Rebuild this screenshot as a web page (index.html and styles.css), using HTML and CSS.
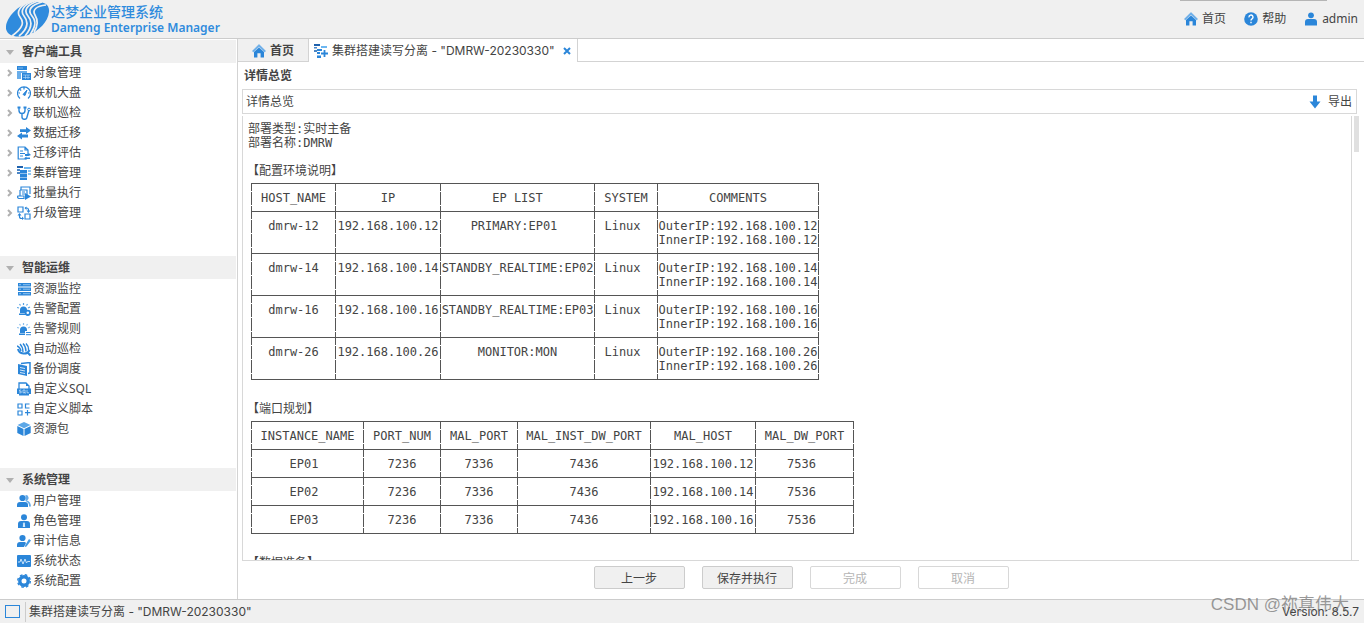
FILE: index.html
```html
<!DOCTYPE html>
<html lang="zh-CN">
<head>
<meta charset="utf-8">
<title>达梦企业管理系统</title>
<link rel="stylesheet" href="styles.css">
</head>
<body>
<svg class="defs" aria-hidden="true">
  <symbol id="home" viewBox="0 0 14 14"><path d="M7 .4 13.600 7l-1 1L7 2.600 1.400 8l-1-1z" fill="#64aae8" stroke="#64aae8" stroke-width=".5"/><path d="M7 3.400 12 8v5.600H8.600V9.200H5.400v4.400H2V8z" fill="#2b86d9"/></symbol>
  <symbol id="tree" viewBox="0 0 14 14"><path d="M0 0h10v4H0z" fill="#2b86d9"/><path d="M0 5h10v2H4v6H0z" fill="#6aaeea"/><path d="M5 7h9v7H5z" fill="#2b86d9"/><path d="M6 9h7M6 11.500h7M8.500 9v4M11 9v4M1 2h5" stroke="#b9dcfa" stroke-width=".6"/></symbol>
  <symbol id="gauge" viewBox="0 0 14 14"><path d="M3 12.500a6.500 6.500 0 1 1 8 0M7 1.500v2M1.500 7h1.500M11 7h1.500M3 3.500l1.200 1" fill="none" stroke="#2b86d9" stroke-width="1.200"/><path d="M10 4 8 9.500 6 8.500z" fill="#2b86d9" stroke="#2b86d9"/></symbol>
  <symbol id="steth" viewBox="0 0 14 14"><path d="M2 2v2.500a3 3 0 0 0 6 0V2M5 7.500v3a2.500 2.500 0 0 0 5 .5l2-7" fill="none" stroke="#2b86d9" stroke-width="1.400"/><path d="M.5.500h3v2h-3zM6.500.500h3v2h-3z" fill="#2b86d9"/><circle cx="12" cy="3.500" r="1.300" fill="#fff" stroke="#2b86d9"/></symbol>
  <symbol id="swap" viewBox="0 0 14 14"><path d="M3 3.200h6V1l5 3.500L9 8V6H3z" fill="#2b86d9"/><path d="M11 8.500H5V6.500L0 10l5 3.500V11.500h6z" fill="#2b86d9"/></symbol>
  <symbol id="assess" viewBox="0 0 14 14"><path d="M9 13H1.200V1H8l3 3v4M8 1v3h3M3 5h3M3 7.500h5M3 10h3" fill="none" stroke="#2b86d9" stroke-width="1.200"/><path d="M8 8h3.500V6.800L14 9l-2.500 1H8zM13 11.500H9.500v-1L7 12.200 9.500 14v-1H13z" fill="#2b86d9"/></symbol>
  <symbol id="cluster" viewBox="0 0 14 14"><path d="M0 0h6v2H0z" fill="#1f62ae"/><path d="M0 3h3v2H0zM0 6h3v2H0z" fill="#4b86c6"/><path d="M7 1h7v2H7z" fill="#6db7f1"/><path d="M11 4h3v2h-3zM11 7h3v2h-3z" fill="#8bc5f3"/><path d="M3 4h7v3.500H3zM3 8h7v3H3zM3 11.500h7V14H3z" fill="#2b86d9"/></symbol>
  <symbol id="clusteradd" viewBox="0 0 14 14"><path d="M0 0h6v2H0z" fill="#1f62ae"/><path d="M0 3h3v1.500H0zM0 6h3v2H0z" fill="#4b86c6"/><path d="M7 2h6v2H7z" fill="#6db7f1"/><path d="M3 5h5v2H3zM3 8h3v2H3zM3 11.500h4V14H3z" fill="#2b86d9"/><path d="M10.500 6v7M7 9.500h7" stroke="#2b86d9" stroke-width="1.800"/></symbol>
  <symbol id="batch" viewBox="0 0 14 14"><path d="M4 4V1h9v7M3 4h7v6M1 10h6v2.500H2A1.500 1.500 0 0 1 1 10zM3 10V4M5 6h3M5 8h3" fill="none" stroke="#2b86d9" stroke-width="1.200"/><path d="m8 7 6 3.500L8 14z" fill="#2b86d9"/></symbol>
  <symbol id="upgrade" viewBox="0 0 14 14"><path d="M1 1h5v5H1zM8 8h5v5H8zM2.500 8v2.500a2 2 0 0 0 2 2H6M8 2h1.500a2 2 0 0 1 2 2v2" fill="none" stroke="#2b86d9" stroke-width="1.200"/><path d="M.5 9.500 2.500 7l2 2.500zM9.500 4.500h4l-2 2.500zM5 10.500l2 2-2 1.500zM9.500.500l-2 1.500 2 2z" fill="#2b86d9"/></symbol>
  <symbol id="server" viewBox="0 0 14 14"><path d="M1 1h13v3.500H1zM1 5.500h13V9H1zM1 10h13v3.500H1z" fill="#2b86d9"/><path d="M2 2.700h2M6 2.700h7M2 7.200h2M6 7.200h7M2 11.700h2M6 11.700h7" stroke="#b9dcfa" stroke-width=".7"/></symbol>
  <symbol id="alarmcfg" viewBox="0 0 14 14"><path d="M3 11V8a3.500 3.500 0 0 1 7 0v3zM2 11.500h7V13H2z" fill="#2b86d9"/><path d="M6.500 1v2M2.500 2l1 1.500M10.500 2l-1 1.500M0 5.500l2 .5M13 5l-2 1" stroke="#56a2e4" stroke-width="1.200"/><circle cx="10.800" cy="10.800" r="2.200" fill="#fff" stroke="#2b86d9" stroke-width="1.800"/></symbol>
  <symbol id="alarmrule" viewBox="0 0 14 14"><path d="M3 11V8a3.500 3.500 0 0 1 7 0v1H8v2zM2 11.500h6V13H2z" fill="#2b86d9"/><path d="M6.500 1v2M2.500 2l1 1.500M10.500 2l-1 1.500M0 5.500l2 .5M13 5l-2 1" stroke="#8abfee" stroke-width="1.200"/><path d="M9 10.500h5M9 12.700h5" stroke="#2b86d9"/></symbol>
  <symbol id="patrol" viewBox="0 0 14 14"><path d="M1 7a6 5.500 0 0 0 11.500 1M11 11l2.500 2.500" fill="none" stroke="#2b86d9" stroke-width="2"/><path d="M3 2q3 3 3 8M6 1.500q3 3 3 8M9 1.500q3 3 2.500 7M0 4q3 1 4 5" fill="none" stroke="#2b86d9" stroke-width="1.400"/></symbol>
  <symbol id="backup" viewBox="0 0 14 14"><path d="M4 1.500 13 .5V11l-2 .5" fill="none" stroke="#2b86d9" stroke-width="1.500"/><path d="m1 2 9 2v10l-9-2z" fill="#2b86d9"/><path d="m3 5.500 5 1M3 8l5 1M3 10.500l5 1" stroke="#fff" stroke-width=".8"/></symbol>
  <symbol id="sqlfile" viewBox="0 0 14 14"><path d="M2 7V1h7l3 3v3" fill="#fff" stroke="#2b86d9" stroke-width="1.300"/><path d="M9 1v3h3zM0 6.500h14V12h-2v1.500H2V12H0z" fill="#2b86d9"/><path d="M4.200 8H2.500v1.300h1.700v1.500H2.200M6 8h2v2.800H6zM7.500 10l1 1.500M10 7.800v3h2" fill="none" stroke="#d3e9fc" stroke-width=".7"/></symbol>
  <symbol id="script" viewBox="0 0 14 14"><path d="M1 2h4v4H1zM1 9h4v4H1zM12.500 2H8.500v4h4M10.500 8v5.500M8 10.700h5.500" fill="none" stroke="#2b86d9" stroke-width="1.200"/></symbol>
  <symbol id="cube" viewBox="0 0 14 14"><path d="m7 0 6.500 3L7 6.300.5 3z" fill="#5ca7e7"/><path d="m.3 4 6.200 3v7L.3 11zM13.700 4 7.500 7v7l6.200-3z" fill="#2b86d9"/></symbol>
  <symbol id="users" viewBox="0 0 14 14"><path d="M8.500 1a2.700 2.700 0 0 1 1 5.300Q13.500 7 14 12.500h-2Q12.500 8.500 8.500 7z" fill="#64aae8"/><circle cx="5.500" cy="4" r="3.100" fill="#2b86d9"/><path d="M0 13v-2q0-3 3-3h5q3 0 3 3v2z" fill="#2b86d9"/></symbol>
  <symbol id="role" viewBox="0 0 14 14"><circle cx="7" cy="3.200" r="3" fill="#2b86d9"/><path d="M1 14v-4q0-3 3-3h6q3 0 3 3v4z" fill="#2b86d9"/><path d="m7 8 .8 1.200L8.200 13H5.800l.4-3.800z" fill="#d3e9fc"/></symbol>
  <symbol id="audit" viewBox="0 0 14 14"><circle cx="5.500" cy="4" r="3.100" fill="#2b86d9"/><path d="M0 13v-2q0-3 3-3h5l1 1-2 4z" fill="#2b86d9"/><path d="m12 5 2 1.500-4.500 6L8 13l.3-2z" fill="#469ae2"/></symbol>
  <symbol id="pulse" viewBox="0 0 14 14"><rect y="1" width="14" height="12" rx="1" fill="#2b86d9"/><path d="M1 8h2l1-3 2 5 2-5 1.500 4 1-1.500H13" fill="none" stroke="#c7e2fa"/></symbol>
  <symbol id="gear" viewBox="0 0 14 14"><circle cx="7" cy="7" r="4.200" fill="none" stroke="#2b86d9" stroke-width="3.400"/><circle cx="7" cy="7" r="6.300" fill="none" stroke="#2b86d9" stroke-width="1.400" stroke-dasharray="2.600 2.350"/></symbol>
  <symbol id="help" viewBox="0 0 14 14"><circle cx="7" cy="7" r="6.800" fill="#2b86d9"/><path d="M5 5.300a2 2 0 1 1 3 1.500q-1 .6-1 1.700M7 9.800v1.400" fill="none" stroke="#fff" stroke-width="1.400"/></symbol>
  <symbol id="user" viewBox="0 0 14 14"><circle cx="7" cy="3.300" r="2.900" fill="#2b86d9"/><path d="M1 13.500V10q0-3 3-3h6q3 0 3 3v3.500z" fill="#2b86d9"/></symbol>
  <symbol id="down" viewBox="0 0 14 14"><path d="M5 .5h4v6h3.500L7 13.500 1.500 6.500H5z" fill="#2b86d9"/></symbol>
  <symbol id="chev" viewBox="0 0 6 8"><path d="m1 1 3 3-3 3" fill="none" stroke="#b0b0b0" stroke-width="2"/></symbol>
  <symbol id="tri" viewBox="0 0 8 5"><path d="M0 0h8L4 5z" fill="#b0b0b0"/></symbol>
</svg>

<header class="topbar">
  <svg class="logo" viewBox="0 0 44 36" aria-hidden="true">
    <path d="M26 1C37 0 44 3 43 11C42 21 33 30 22 34C12 37 2 36 0 28C-1 19 10 4 26 1z" fill="#2f8bdd"/>
    <g fill="none" stroke="#f0f0f0" stroke-width="1.700">
      <path d="M25 0C14 4 10 11 14 16s4 10-8 19"/>
      <path d="M28 0C17 4 14 10 18 15s5 12-5 20"/>
      <path d="M32 0C21 4 17 9 22 15s4 12-3 20"/>
      <path d="M36 1C25 4 21 9 26 15s3 11-2 19"/>
      <path d="M40 4C30 5 26 9 29 14s3 11-1 17"/>
    </g>
  </svg>
  <div class="brand">
    <div class="brand-cn">达梦企业管理系统</div>
    <div class="brand-en">Dameng Enterprise Manager</div>
  </div>
  <div class="drawer-edge"></div>
  <nav class="toplinks">
    <a href="#"><svg><use href="#home"/></svg>首页</a>
    <a href="#"><svg><use href="#help"/></svg>帮助</a>
    <a href="#"><svg><use href="#user"/></svg>admin</a>
  </nav>
</header>

<div class="workspace">
  <aside class="sidebar">
    <section class="group tools">
      <h2><svg><use href="#tri"/></svg>客户端工具</h2>
      <a href="#"><svg class="chev"><use href="#chev"/></svg><svg><use href="#tree"/></svg>对象管理</a>
      <a href="#"><svg class="chev"><use href="#chev"/></svg><svg><use href="#gauge"/></svg>联机大盘</a>
      <a href="#"><svg class="chev"><use href="#chev"/></svg><svg><use href="#steth"/></svg>联机巡检</a>
      <a href="#"><svg class="chev"><use href="#chev"/></svg><svg><use href="#swap"/></svg>数据迁移</a>
      <a href="#"><svg class="chev"><use href="#chev"/></svg><svg><use href="#assess"/></svg>迁移评估</a>
      <a href="#"><svg class="chev"><use href="#chev"/></svg><svg><use href="#cluster"/></svg>集群管理</a>
      <a href="#"><svg class="chev"><use href="#chev"/></svg><svg><use href="#batch"/></svg>批量执行</a>
      <a href="#"><svg class="chev"><use href="#chev"/></svg><svg><use href="#upgrade"/></svg>升级管理</a>
    </section>
    <section class="group ops">
      <h2><svg><use href="#tri"/></svg>智能运维</h2>
      <a href="#"><svg><use href="#server"/></svg>资源监控</a>
      <a href="#"><svg><use href="#alarmcfg"/></svg>告警配置</a>
      <a href="#"><svg><use href="#alarmrule"/></svg>告警规则</a>
      <a href="#"><svg><use href="#patrol"/></svg>自动巡检</a>
      <a href="#"><svg><use href="#backup"/></svg>备份调度</a>
      <a href="#"><svg><use href="#sqlfile"/></svg>自定义SQL</a>
      <a href="#"><svg><use href="#script"/></svg>自定义脚本</a>
      <a href="#"><svg><use href="#cube"/></svg>资源包</a>
    </section>
    <section class="group system">
      <h2><svg><use href="#tri"/></svg>系统管理</h2>
      <a href="#"><svg><use href="#users"/></svg>用户管理</a>
      <a href="#"><svg><use href="#role"/></svg>角色管理</a>
      <a href="#"><svg><use href="#audit"/></svg>审计信息</a>
      <a href="#"><svg><use href="#pulse"/></svg>系统状态</a>
      <a href="#"><svg><use href="#gear"/></svg>系统配置</a>
    </section>
  </aside>

  <main class="main">
    <div class="tabs">
      <button class="tab home"><svg><use href="#home"/></svg>首页</button>
      <button class="tab active"><svg><use href="#clusteradd"/></svg>集群搭建读写分离 - "DMRW-20230330"<svg class="close" viewBox="0 0 8 8"><path d="m1 1 6 6M7 1 1 7" stroke="#2b86d9" stroke-width="2"/></svg></button>
    </div>
    <h1>详情总览</h1>
    <div class="toolbar">
      <span>详情总览</span>
      <button class="export"><svg><use href="#down"/></svg>导出</button>
    </div>
    <div class="viewer">
      <div class="report">
        <p>部署类型:实时主备</p>
        <p>部署名称:DMRW</p>
        <h3 class="first">【配置环境说明】</h3>
        <table>
          <colgroup><col class="c84"><col class="c105"><col class="c154"><col class="c63"><col class="c162"></colgroup>
          <thead><tr><th>HOST_NAME</th><th>IP</th><th>EP LIST</th><th>SYSTEM</th><th>COMMENTS</th></tr></thead>
          <tbody>
            <tr><td>dmrw-12</td><td>192.168.100.12</td><td class="short">PRIMARY:EP01</td><td class="short">Linux</td><td>OuterIP:192.168.100.12<br>InnerIP:192.168.100.12</td></tr>
            <tr><td>dmrw-14</td><td>192.168.100.14</td><td>STANDBY_REALTIME:EP02</td><td class="short">Linux</td><td>OuterIP:192.168.100.14<br>InnerIP:192.168.100.14</td></tr>
            <tr><td>dmrw-16</td><td>192.168.100.16</td><td>STANDBY_REALTIME:EP03</td><td class="short">Linux</td><td>OuterIP:192.168.100.16<br>InnerIP:192.168.100.16</td></tr>
            <tr><td>dmrw-26</td><td>192.168.100.26</td><td>MONITOR:MON</td><td class="short">Linux</td><td>OuterIP:192.168.100.26<br>InnerIP:192.168.100.26</td></tr>
          </tbody>
        </table>
        <h3>【端口规划】</h3>
        <table>
          <colgroup><col class="c112"><col class="c77"><col class="c77"><col class="c133"><col class="c105"><col class="c99"></colgroup>
          <thead><tr><th>INSTANCE_NAME</th><th>PORT_NUM</th><th>MAL_PORT</th><th>MAL_INST_DW_PORT</th><th>MAL_HOST</th><th>MAL_DW_PORT</th></tr></thead>
          <tbody>
            <tr><td class="short">EP01</td><td>7236</td><td>7336</td><td>7436</td><td>192.168.100.12</td><td class="short">7536</td></tr>
            <tr><td class="short">EP02</td><td>7236</td><td>7336</td><td>7436</td><td>192.168.100.14</td><td class="short">7536</td></tr>
            <tr><td class="short">EP03</td><td>7236</td><td>7336</td><td>7436</td><td>192.168.100.16</td><td class="short">7536</td></tr>
          </tbody>
        </table>
        <h3>【数据准备】</h3>
      </div>
      <div class="scroll"><div class="thumb"></div></div>
    </div>
    <div class="actions">
      <button>上一步</button>
      <button>保存并执行</button>
      <button disabled>完成</button>
      <button disabled>取消</button>
    </div>
  </main>
</div>

<footer class="status">
  <button class="desktop" aria-label="显示桌面"></button>
  <span class="task">集群搭建读写分离 - "DMRW-20230330"</span>
  <span class="version">Version: 8.5.7</span>
  <span class="watermark">CSDN @祢真伟大</span>
</footer>
</body>
</html>
```
FILE: styles.css
```css
* { box-sizing: border-box; }
html, body { height: 100%; }
body {
  margin: 0;
  display: flex;
  flex-direction: column;
  overflow: hidden;
  background: #fff;
  color: #444;
  font: 12px/20px "Noto Sans", "Noto Sans CJK SC", sans-serif;
}
a { color: inherit; text-decoration: none; }
button { font: inherit; color: inherit; margin: 0; padding: 0; border: 0; background: none; }
h1, h2, h3, p { margin: 0; font: inherit; }
svg { width: 14px; height: 14px; flex: none; }
.defs { position: absolute; width: 0; height: 0; }

.topbar {
  position: relative;
  flex: none;
  display: flex;
  align-items: center;
  height: 39px;
  padding: 0 6px;
  background: #f0f0f0;
  border-bottom: 1px solid #ccc;
}
.logo { width: 44px; height: 36px; }
.brand { color: #2f8bdd; padding-left: 1px; font-weight: 500; }
.brand-cn { font-size: 14px; line-height: 16px; }
.brand-en { font-size: 12px; line-height: 15px; font-weight: 600; }
.drawer-edge { position: absolute; top: 0; right: 37px; width: 147px; height: 1px; background: #b5b5b5; }
.toplinks { display: flex; gap: 18px; margin-left: auto; }
.toplinks a { display: flex; align-items: center; gap: 4px; }

.workspace { flex: 1; display: flex; min-height: 0; }
.sidebar { flex: none; width: 238px; padding: 1px 1px 0 0; border-right: 1px solid #d3d3d3; }
.tools { height: 216px; }
.ops { height: 212px; }
.group h2 {
  display: flex;
  align-items: center;
  gap: 8px;
  height: 23px;
  padding: 1px 0 0 6px;
  background: #f0f0f0;
  font-weight: 600;
}
.group h2 svg { width: 8px; height: 5px; }
.group a { display: flex; align-items: center; gap: 2px; height: 20px; padding-left: 17px; }
.tools a { padding-left: 7px; }
.group .chev { width: 6px; height: 8px; margin-right: 2px; }

.main { flex: 1; min-width: 0; display: flex; flex-direction: column; }
.tabs { flex: none; display: flex; height: 23px; border-bottom: 1px solid #d3d3d3; }
.tab { display: flex; align-items: center; gap: 4px; height: 22px; padding-top: 2px; border-right: 1px solid #d3d3d3; }
.tab.home { padding: 2px 14px 0; background: #f0f0f0; font-weight: 600; }
.tab.active { height: 23px; padding: 1px 6px 0 5px; background: #fff; }
.tab.active, .status { font-family: Inter, "Noto Sans CJK SC", sans-serif; }
.tab .close { width: 8px; height: 8px; margin-left: 4px; }
h1 { flex: none; padding: 4px 6px; height: 27px; font-weight: 600; }
.toolbar {
  flex: none;
  display: flex;
  align-items: center;
  justify-content: space-between;
  height: 25px;
  margin: 0 7px 2px 4px;
  padding: 0 4px 0 3px;
  border: 1px solid #d8d8d8;
}
.export { display: flex; align-items: center; gap: 6px; }
.viewer {
  flex: 1;
  display: flex;
  min-height: 0;
  margin: 0 5px 0 4px;
  border-left: 1px solid #d8d8d8;
  border-bottom: 1px solid #d8d8d8;
}
.report {
  flex: 1;
  min-width: 0;
  overflow: hidden;
  padding: 6px 8px 0 5px;
  border-right: 1px solid #d8d8d8;
  font: 12px/14px "DejaVu Sans Mono", "Noto Sans CJK SC", monospace;
}
.scroll { width: 7px; padding-left: 2px; }
.thumb { height: 36px; background: #e0e0e0; }
.report h3 { margin: 22px 0 5px -1px; }
.report h3.first { margin-top: 14px; }
.report table {
  margin-left: 3px;
  table-layout: fixed;
  width: 0;
  border-spacing: 0;
}
.report th, .report td {
  padding: 7px 0 6px 1px;
  border-top: 1px solid #555;
  font-weight: normal;
  text-align: center;
  vertical-align: top;
  white-space: nowrap;
  background: linear-gradient(#555 7px, transparent 7px, transparent 8px, #555 8px) 0 0 / 1px 14px repeat-y;
}
.report th:last-child, .report td:last-child {
  padding-right: 1px;
  background:
    linear-gradient(#555 7px, transparent 7px, transparent 8px, #555 8px) 0 0 / 1px 14px repeat-y,
    linear-gradient(#555 7px, transparent 7px, transparent 8px, #555 8px) 100% 0 / 1px 14px repeat-y;
}
.report tr:last-child td { border-bottom: 1px solid #555; }
.report tbody tr { height: 28px; }
.report table:first-of-type tbody tr { height: 42px; }
.report .short, .report td.short:last-child { padding-right: 7px; }
.c63 { width: 63px; }
.c77 { width: 77px; }
.c84 { width: 84px; }
.c99 { width: 99px; }
.c105 { width: 105px; }
.c112 { width: 112px; }
.c133 { width: 133px; }
.c154 { width: 154px; }
.c162 { width: 162px; }

.actions { flex: none; display: flex; justify-content: center; gap: 17px; padding: 5px 0 10px; }
.actions button {
  width: 91px;
  height: 23px;
  padding-top: 2px;
  background: #f0f0f0;
  border: 1px solid #ccc;
  border-radius: 2px;
}
.actions button:disabled { background: #fff; border-color: #d8d8d8; color: #b5b5b5; }

.status {
  position: relative;
  flex: none;
  display: flex;
  align-items: center;
  height: 24px;
  padding: 0 5px;
  background: #f0f0f0;
  border-top: 1px solid #ccc;
}
.status .desktop { width: 15px; height: 13px; border: 1px solid #2b86d9; }
.task { margin-left: 5px; padding-left: 3px; border-left: 1px solid #ccc; }
.version { margin-left: auto; }
.watermark {
  position: absolute;
  right: 15px;
  top: -6px;
  color: rgba(120, 120, 120, .75);
  font: 17px/22px "Liberation Sans", "Noto Sans CJK SC", sans-serif;
}
```
